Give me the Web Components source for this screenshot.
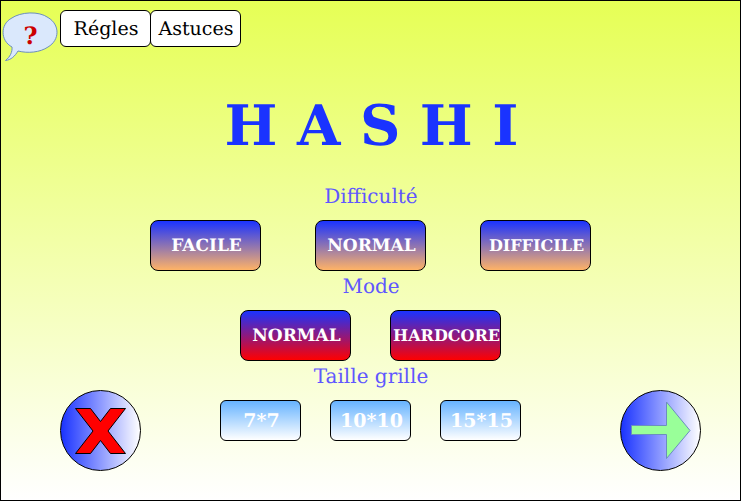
<!DOCTYPE html>
<html lang="fr">
<head>
<meta charset="utf-8">
<title>Hashi</title>
<style>
html, body { margin: 0; min-height: 100vh; }
body { display: flex; font-family: "DejaVu Serif", serif; text-rendering: geometricPrecision; }
</style>
</head>
<body>
<hashi-menu></hashi-menu>
<script>
class HashiElement extends HTMLElement {
  connectedCallback() {
    if (this.shadowRoot) return;
    this.attachShadow({ mode: "open" }).innerHTML = this.render();
  }
}

customElements.define("menu-button", class extends HashiElement {
  render() {
    return `<style>
      :host { display: block; width: 111px; height: 51px; }
      :host([kind="tab"]) { width: 91px; height: 37px; }
      :host([kind="size"]) { width: 81px; height: 41px; }
      button { box-sizing: border-box; width: 100%; height: 100%; margin: 0; padding: 0 0 0 2px;
        border: 1px solid #000; border-radius: 8px; color: #fff; white-space: nowrap; text-rendering: inherit;
        font: bold 17px/24px "DejaVu Serif", serif; cursor: pointer;
        background: linear-gradient(#1a33ff, #ffb366); }
      :host([long]) button { font-size: 16px; }
      :host([kind="mode"]) button { background: linear-gradient(#1a33ff, #ff0000); }
      :host([kind="size"]) button { font-size: 19px; border-radius: 6px; background: linear-gradient(#66b3ff, #fff); }
      :host([kind="tab"]) button { font-size: 19px; font-weight: normal; color: #000; background: #fff; padding: 0 0 0 1px; border-radius: 6px; }
    </style><button type="button"><slot></slot></button>`;
  }
});

customElements.define("round-button", class extends HashiElement {
  render() {
    return `<style>
      :host { display: block; flex: none; width: 81px; height: 81px; }
      button { box-sizing: border-box; width: 100%; height: 100%; padding: 0; border: 1px solid #000;
        border-radius: 50%; background: linear-gradient(90deg, #1a33ff, #fff); cursor: pointer; }
      ::slotted(svg) { display: block; width: 100%; height: 100%; }
    </style><button type="button" aria-label="${this.getAttribute("label")}"><slot></slot></button>`;
  }
});

customElements.define("help-bubble", class extends HashiElement {
  render() {
    return `<style>
      :host { display: block; width: 59px; height: 53px; }
      button { display: grid; width: 100%; height: 100%; padding: 0; border: 0; background: none; cursor: pointer;
        font: bold 24px/28px "DejaVu Serif", serif; color: #cc0000; text-rendering: inherit; }
      svg { grid-area: 1 / 1; width: 59px; height: 53px; }
      span { grid-area: 1 / 1; place-self: start center; padding-top: 12px; }
    </style><button type="button" aria-label="Aide">
      <svg viewBox="0 0 59 53" aria-hidden="true"><path d="M11 37C-1 30.500 -.500 14.500 10 8.500C20 1.500 38 1 47 7.500C59 14.500 59 30 47 37C39 42.500 27 43.500 17 41C14 46 10 50 4.500 50.500C9 47 11.500 42 11 37Z" fill="#dae8fc" stroke="#6c8ebf"/></svg>
      <span>?</span></button>`;
  }
});

customElements.define("option-group", class extends HashiElement {
  render() {
    return `<style>
      :host { display: flex; flex-direction: column; align-items: center; }
      h2 { margin: 0 0 9px; padding-left: 1px; font: 20px/30px "DejaVu Serif", serif; color: #6057ff; }
      div { display: flex; gap: 39px; }
      :host([spacing="wide"]) div { gap: 54px; }
      :host([spacing="narrow"]) div { gap: 29px; }
    </style><h2>${this.getAttribute("label")}</h2><div role="group" aria-label="${this.getAttribute("label")}"><slot></slot></div>`;
  }
});

customElements.define("hashi-menu", class extends HashiElement {
  render() {
    return `<style>
      :host { box-sizing: border-box; flex: 1; display: flex; flex-direction: column; border: 1px solid #000;
        background: linear-gradient(#e6ff55, #fff); }
      header { display: flex; padding-top: 9px; align-items: flex-start; }
      nav { display: flex; }
      nav menu-button + menu-button { margin-left: -1px; }
      h1 { margin: 35px 0 27px; padding-left: 2px; text-align: center; font: bold 56px/56px "DejaVu Serif", serif; color: #1a33ff; }
      footer { display: flex; justify-content: space-between; align-items: flex-start; padding: 0 39px 29px 59px; }
      footer option-group { margin-right: 20px; }
      round-button { margin-top: 29px; }
    </style>
    <header>
      <help-bubble></help-bubble>
      <nav><menu-button kind="tab">Régles</menu-button><menu-button kind="tab">Astuces</menu-button></nav>
    </header>
    <h1>H A S H I</h1>
    <option-group label="Difficulté" spacing="wide">
      <menu-button>FACILE</menu-button><menu-button>NORMAL</menu-button><menu-button long>DIFFICILE</menu-button>
    </option-group>
    <option-group label="Mode">
      <menu-button kind="mode">NORMAL</menu-button><menu-button kind="mode" long>HARDCORE</menu-button>
    </option-group>
    <footer>
      <round-button label="Quitter"><svg viewBox="0 0 79 79" aria-hidden="true"><path d="M14.500 17.500H29.500L39.500 30.500L49.500 17.500H64.500L47 40L64.500 62.500H49.500L39.500 49.500L29.500 62.500H14.500L32 40Z" fill="#f00" stroke="#000"/></svg></round-button>
      <option-group label="Taille grille" spacing="narrow">
        <menu-button kind="size">7*7</menu-button><menu-button kind="size">10*10</menu-button><menu-button kind="size">15*15</menu-button>
      </option-group>
      <round-button label="Continuer"><svg viewBox="0 0 79 79" aria-hidden="true"><path d="M10.500 34.500H45.500V11L69 39.500L45.500 67.500V43.500H10.500Z" fill="#99ff99" stroke="#6c8ebf"/></svg></round-button>
    </footer>`;
  }
});
</script>
</body>
</html>
